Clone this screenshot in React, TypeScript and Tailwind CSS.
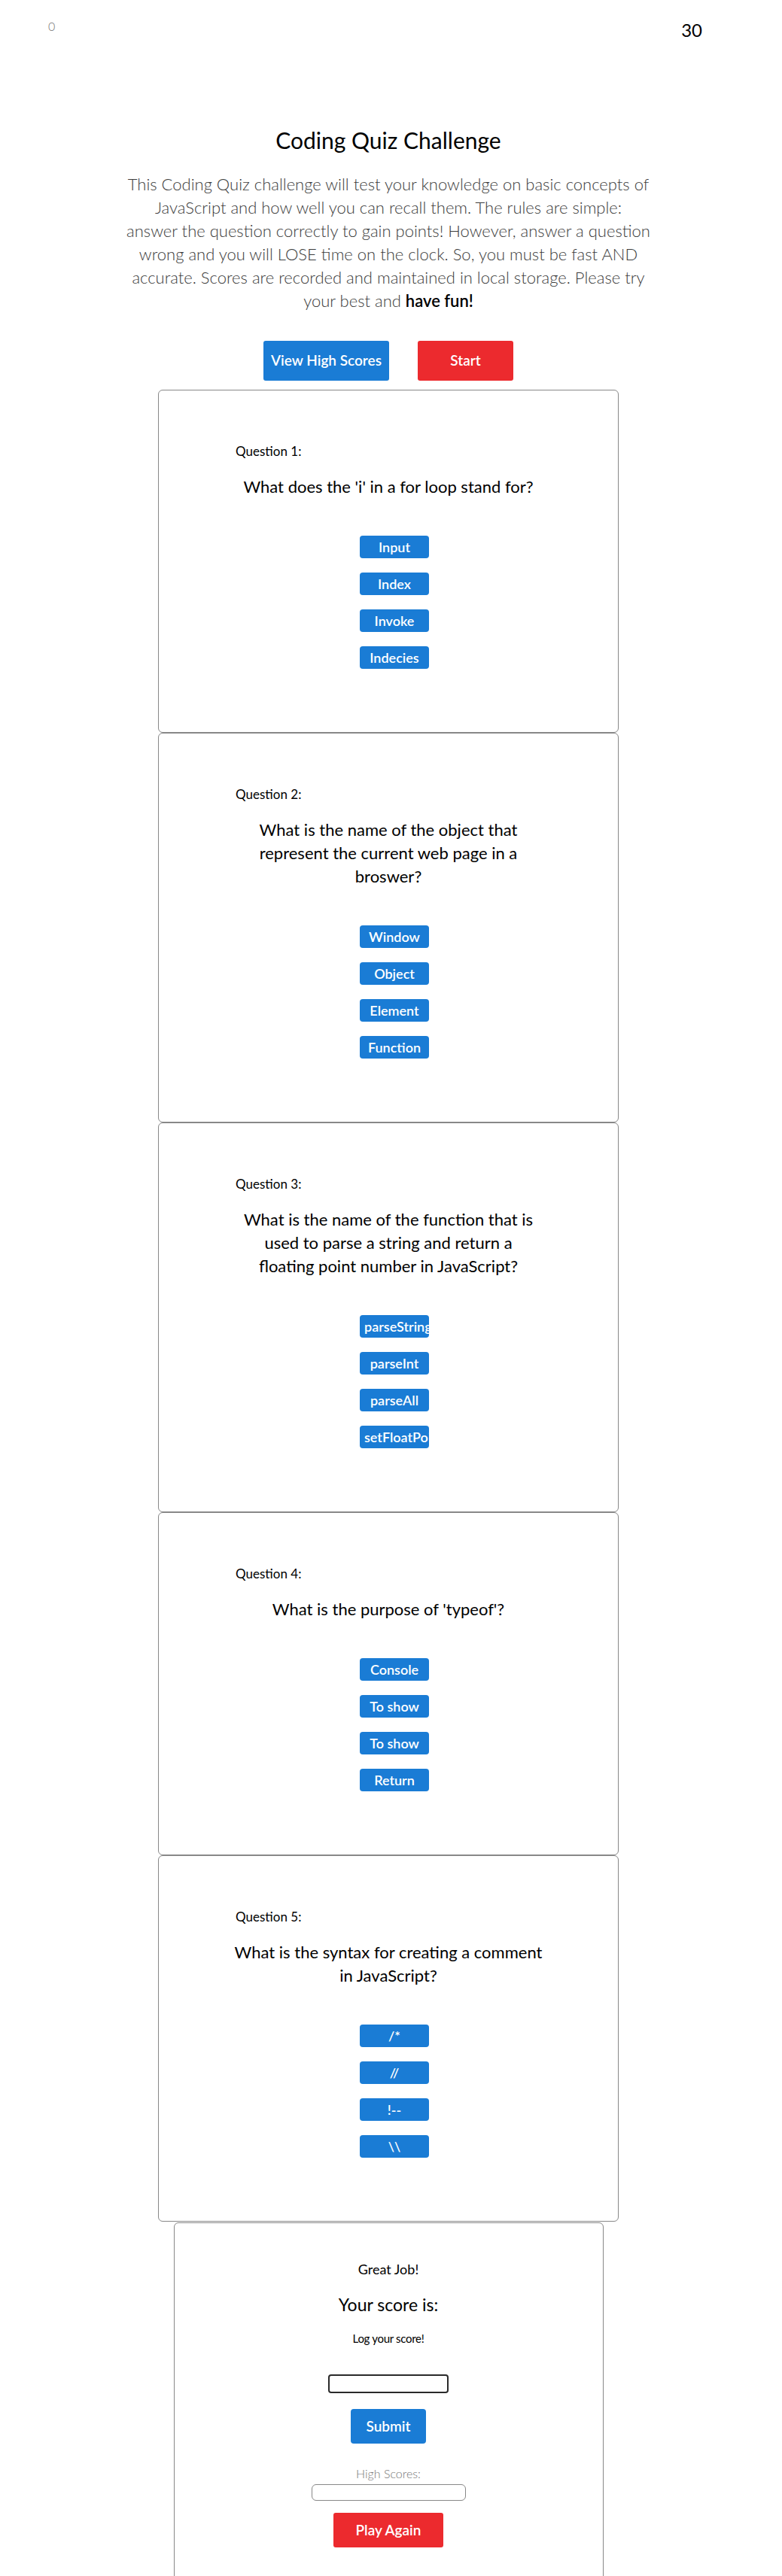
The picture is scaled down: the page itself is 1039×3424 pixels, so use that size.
const questions = [
  {
    lines: ["What does the 'i' in a for loop stand for?"],
    answers: ["Input", "Index", "Invoke", "Indecies"],
  },
  {
    lines: ["What is the name of the object that", "represent the current web page in a", "broswer?"],
    answers: ["Window", "Object", "Element", "Function"],
  },
  {
    lines: [
      "What is the name of the function that is",
      "used to parse a string and return a",
      "floating point number in JavaScript?",
    ],
    answers: ["parseString", "parseInt", "parseAll", "setFloatPoint"],
  },
  {
    lines: ["What is the purpose of 'typeof'?"],
    answers: ["Console", "To show", "To show", "Return"],
  },
  {
    lines: ["What is the syntax for creating a comment", "in JavaScript?"],
    answers: ["/*", "//", "!--", "\\\\"],
  },
];

const intro = [
  "This Coding Quiz challenge will test your knowledge on basic concepts of",
  "JavaScript and how well you can recall them. The rules are simple:",
  "answer the question correctly to gain points! However, answer a question",
  "wrong and you will LOSE time on the clock. So, you must be fast AND",
  "accurate. Scores are recorded and maintained in local storage. Please try",
];

const App = () => {
  return (
    <div className="min-h-screen bg-white font-['Lato',sans-serif] text-black">
      <header className="flex items-start justify-between pl-[64px] pr-[106px] pt-[23px]">
        <span className="text-[16px] leading-[24px] font-light text-[#777]">0</span>
        <span className="mt-[1px] text-[24px] leading-[32px]">30</span>
      </header>

      <main className="flex flex-col items-center pr-[7px]">
        <h1 className="mt-[112px] text-[30px] leading-[36px] font-normal">Coding Quiz Challenge</h1>

        <p className="mt-[25px] w-[780px] text-center text-[22px] leading-[31px] font-light text-[#3c3c3c]">
          {intro.map((line, i) => (
            <span key={i} className="block">
              {line}
            </span>
          ))}
          <span className="block">
            your best and <strong className="font-semibold text-black">have fun!</strong>
          </span>
        </p>

        <div className="mt-[38px] flex gap-[38px]">
          <button className="h-[53px] w-[167px] rounded-[3px] bg-[#1a7cd5] text-[19px] font-semibold text-white">
            View High Scores
          </button>
          <button className="h-[53px] w-[127px] rounded-[3px] bg-[#ec2a2e] text-[19px] font-semibold text-white">
            Start
          </button>
        </div>

        <div className="mt-[12px] flex w-[612px] flex-col">
          {questions.map((q, index) => (
            <section
              key={index}
              className="rounded-[6px] border border-[#888] pt-[69px] pb-[84px]"
            >
              <div className="mx-auto w-[410px]">
                <h3 className="pl-[2px] text-[17px] leading-[24px] font-normal">Question {index + 1}:</h3>
                <h2 className="mt-[19px] text-center text-[22px] leading-[31px] font-normal">
                  {q.lines.map((line, i) => (
                    <span key={i} className="block">
                      {line}
                    </span>
                  ))}
                </h2>
              </div>
              <ul className="mt-[50px] flex flex-col items-center gap-[19px] pl-[16px]">
                {q.answers.map((answer, i) => (
                  <li key={i}>
                    <button className="block h-[30px] w-[92px] overflow-hidden whitespace-nowrap rounded-[4px] bg-[#1a7cd5] px-[6px] text-center text-[18px] font-semibold text-white">
                      {answer}
                    </button>
                  </li>
                ))}
              </ul>
            </section>
          ))}
        </div>

        <section className="mt-[1px] flex w-[571px] flex-col items-center rounded-[6px] border border-[#888] pt-[49px] pb-[60px]">
          <p className="text-[18px] leading-[24px]">Great Job!</p>
          <h2 className="mt-[20px] text-[23px] leading-[30px] font-normal">Your score is:</h2>
          <p className="mt-[20px] text-[15px] leading-[20px] tracking-[-0.3px]">Log your score!</p>
          <input
            type="text"
            className="mt-[38px] h-[25px] w-[160px] rounded-[4px] border-2 border-[#2a2a2a] bg-white"
          />
          <button className="mt-[21px] h-[46px] w-[100px] rounded-[4px] bg-[#1a7cd5] text-[19px] font-semibold text-white">
            Submit
          </button>
          <p className="mt-[29px] text-[16px] leading-[22px] font-light text-[#777]">High Scores:</p>
          <div className="mt-[3px] h-[22px] w-[205px] rounded-[6px] border border-[#888]" />
          <button className="mt-[16px] h-[46px] w-[146px] rounded-[3px] bg-[#ec2a2e] text-[19px] font-semibold text-white">
            Play Again
          </button>
        </section>
      </main>
    </div>
  );
};

export default App;
